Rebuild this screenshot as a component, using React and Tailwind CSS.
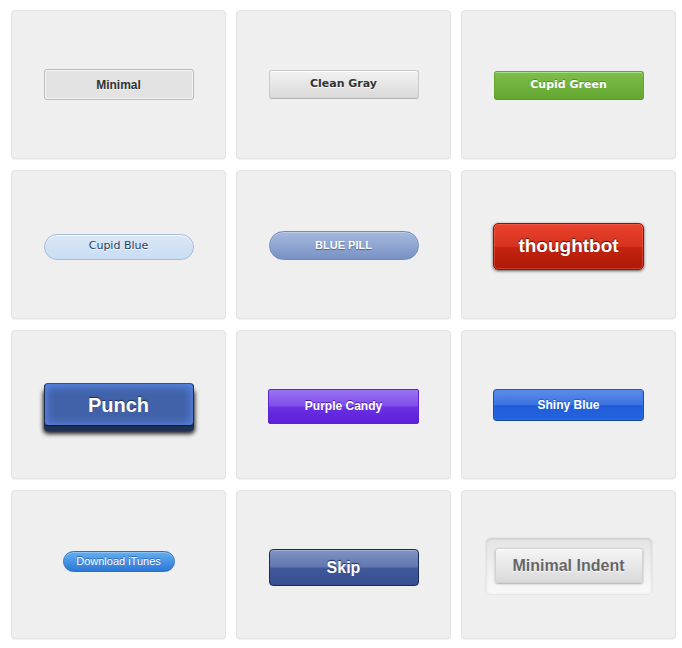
import React from "react";

const arial = "font-['Liberation_Sans',Arial,sans-serif]";
const dejavu = "font-['DejaVu_Sans',Verdana,sans-serif]";

function Card({ children }) {
  return (
    <div className="h-[149px] rounded-[4px] border border-[#e3e3e3] bg-[#efefef] shadow-[0_1px_1px_rgba(0,0,0,0.06)] flex items-center justify-center">
      {children}
    </div>
  );
}

export default function App() {
  return (
    <div className={`min-h-[648px] w-[682px] bg-white pl-[11px] pt-[10px] ${arial}`}>
      <div className="grid grid-cols-[215px_215px_215px] gap-x-[10px] gap-y-[11px]">
        <Card>
          <button className="w-[150px] h-[31px] rounded-[3px] border border-[#bbbbbb] bg-[#e3e3e3] shadow-[inset_0_0_1px_1px_#f6f6f6] text-[12px] font-bold text-[#333] [text-shadow:0_1px_0_#f2f2f2] flex items-center justify-center">
            Minimal
          </button>
        </Card>
        <Card>
          <button className={`w-[150px] h-[29px] rounded-[3px] border border-[#c9c9c9] border-b-[#b0b0b0] bg-[linear-gradient(to_bottom,#f2f2f2,#d9d9d9)] shadow-[inset_0_1px_0_#ffffff] text-[11px] font-bold text-[#333] [text-shadow:0_1px_0_#fff] ${dejavu} flex items-center justify-center`}>
            Clean Gray
          </button>
        </Card>
        <Card>
          <button className={`mt-[2px] w-[150px] h-[29px] rounded-[3px] border border-[#63a62f] border-b-[#5b992b] bg-[linear-gradient(to_bottom,#7fbf4d,#63a62f)] shadow-[inset_0_1px_0_0_#a4e388] text-[11px] font-bold text-white [text-shadow:0_-1px_0_#4c9021] ${dejavu} flex items-center justify-center`}>
            Cupid Green
          </button>
        </Card>

        <Card>
          <button className={`mt-[4px] w-[150px] h-[26px] rounded-full border border-[#a8bcd6] bg-[linear-gradient(to_bottom,#dae7f6,#c9ddf4)] shadow-[inset_0_1px_0_0_#f4f9ff] text-[11px] text-[#204066] [text-shadow:0_1px_0_#fff] ${dejavu} flex items-center justify-center`}>
            Cupid Blue
          </button>
        </Card>
        <Card>
          <button className="mt-[2px] w-[150px] h-[29px] rounded-full border border-[#7089bb] bg-[linear-gradient(to_bottom,#a6b9dd,#90a6d1_50%,#7892c4)] shadow-[inset_0_1px_0_#bccbe6] text-[11px] font-bold text-white [text-shadow:0_1px_1px_#4d5f8f] flex items-center justify-center">
            BLUE PILL
          </button>
        </Card>
        <Card>
          <button className="mt-[3px] w-[151px] h-[47px] rounded-[5px] border border-[#951100] bg-[linear-gradient(to_bottom,#ea432e_0%,#d5321f_50%,#c42411_52%,#ad1806_100%)] shadow-[inset_0_0_0_1px_rgba(255,115,100,0.4),0_1px_3px_#555] text-[19px] font-bold text-white [text-shadow:0_-1px_1px_rgba(0,0,0,0.7)] flex items-center justify-center">
            thoughtbot
          </button>
        </Card>

        <Card>
          <button className="w-[150px] h-[43px] rounded-[4px] border border-[#1f2d4d] border-t-[#38538c] border-b-[#151e33] bg-[#4162a8] shadow-[inset_0_1px_10px_1px_#5c8bee,0_1px_0_#1d2c4d,0_5px_0_#1f3053,0_7px_4px_1px_#222] text-[20px] font-bold text-white [text-shadow:0_-1px_1px_#1e2d4d] flex items-center justify-center">
            Punch
          </button>
        </Card>
        <Card>
          <button className="mt-[3px] w-[151px] h-[35px] rounded-[2px] border border-[#5a25d0] bg-[linear-gradient(to_bottom,#9a74f2_0%,#7f4eea_48%,#6a30e2_52%,#5b20d8_100%)] text-[12px] font-bold text-white [text-shadow:0_-1px_0_#4a1ca0] flex items-center justify-center">
            Purple Candy
          </button>
        </Card>
        <Card>
          <button className="mt-[1px] w-[151px] h-[32px] rounded-[4px] border border-[#1b4db3] border-t-[#1f58cc] border-b-[#174299] bg-[linear-gradient(to_bottom,#5e8cea_0%,#3a72e0_50%,#1f5cd9_52%,#2463de_100%)] shadow-[inset_0_0_2px_0_rgba(57,140,255,0.8)] text-[12px] font-bold text-white [text-shadow:0_-1px_1px_#1a5ad9] flex items-center justify-center">
            Shiny Blue
          </button>
        </Card>

        <Card>
          <button className="-mt-[6px] w-[112px] h-[21px] rounded-full border border-[#2c6fc3] bg-[linear-gradient(to_bottom,#64aef0,#2c78d7)] shadow-[inset_0_1px_0_#8cc4f6] text-[11px] text-white [text-shadow:0_-1px_0_#2a66b5] flex items-center justify-center">
            Download iTunes
          </button>
        </Card>
        <Card>
          <button className="mt-[6px] w-[150px] h-[37px] rounded-[4px] border border-[#1c2a56] bg-[linear-gradient(to_bottom,#8294c3_0%,#5f76ae_48%,#41599b_52%,#354e90_100%)] shadow-[inset_0_1px_0_#9fb0d8] text-[16px] font-bold text-white [text-shadow:0_-1px_1px_#1c2a56] flex items-center justify-center">
            Skip
          </button>
        </Card>
        <Card>
          <div className="mt-[2px] w-[168px] h-[58px] rounded-[6px] border border-[#e6e6e6] bg-[linear-gradient(to_bottom,#e4e4e4,#f9f9f9)] shadow-[inset_0_1px_3px_rgba(0,0,0,0.12)] flex items-center justify-center">
            <button className="w-[148px] h-[35px] rounded-[3px] border border-[#d2d2d2] bg-[linear-gradient(to_bottom,#f5f5f5,#dadada)] shadow-[inset_0_1px_0_#fff,0_1px_2px_rgba(0,0,0,0.3)] text-[16px] font-bold text-[#666] [text-shadow:0_1px_0_#fff] flex items-center justify-center">
              Minimal Indent
            </button>
          </div>
        </Card>
      </div>
    </div>
  );
}
